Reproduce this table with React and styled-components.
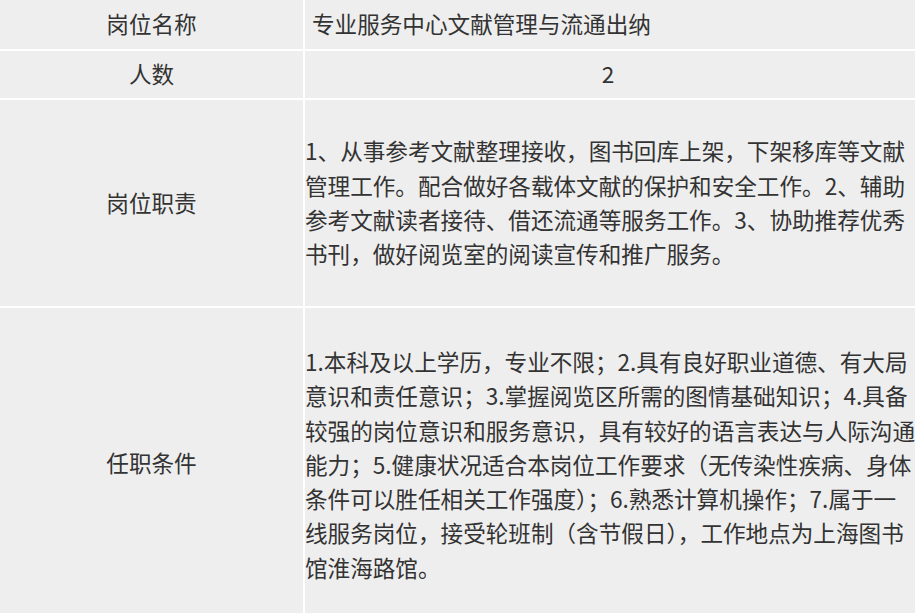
import React from "react";
import styled, { createGlobalStyle } from "styled-components";

const GlobalStyle = createGlobalStyle`
  html, body {
    margin: 0;
    padding: 0;
    background: #ffffff;
    overflow: hidden;
  }
  body {
    font-family: "Noto Sans CJK SC", "Noto Sans", sans-serif;
    color: #333333;
  }
`;

const Table = styled.div`
  display: grid;
  grid-template-columns: 303px 1fr;
  grid-template-rows: 49px 47px 206px auto;
  gap: 2px;
  background: #ffffff;
  width: 915px;
`;

const Label = styled.div`
  background: #eeeeee;
  display: flex;
  align-items: center;
  justify-content: center;
  font-size: 22.6px;
  line-height: 1;
`;

const Value = styled.div`
  background: #eeeeee;
  display: flex;
  flex-direction: column;
  justify-content: center;
  align-items: ${(p) => (p.$center ? "center" : "flex-start")};
  padding: ${(p) => p.$pad || "0"};
  font-size: 22.6px;
  line-height: 1;
`;

const Paragraph = styled.div`
  font-size: 22.6px;
  line-height: 34.3px;
  white-space: nowrap;
`;

const Line = styled.div``;

const rows = [
  { label: "岗位名称", text: ["专业服务中心文献管理与流通出纳"], pad: "0 0 0 7px" },
  { label: "人数", text: ["2"], center: true, pad: "0 4px 0 0" },
  {
    label: "岗位职责",
    pad: "0",
    para: [
      "1、从事参考文献整理接收，图书回库上架，下架移库等文献",
      "管理工作。配合做好各载体文献的保护和安全工作。2、辅助",
      "参考文献读者接待、借还流通等服务工作。3、协助推荐优秀",
      "书刊，做好阅览室的阅读宣传和推广服务。",
    ],
  },
  {
    label: "任职条件",
    pad: "37px 0 33px 0",
    para: [
      "1.本科及以上学历，专业不限；2.具有良好职业道德、有大局",
      "意识和责任意识；3.掌握阅览区所需的图情基础知识；4.具备",
      "较强的岗位意识和服务意识，具有较好的语言表达与人际沟通",
      "能力；5.健康状况适合本岗位工作要求（无传染性疾病、身体",
      "条件可以胜任相关工作强度）；6.熟悉计算机操作；7.属于一",
      "线服务岗位，接受轮班制（含节假日），工作地点为上海图书",
      "馆淮海路馆。",
    ],
  },
];

export default function App() {
  return (
    <>
      <GlobalStyle />
      <Table>
        {rows.map((row) => (
          <React.Fragment key={row.label}>
            <Label>{row.label}</Label>
            <Value $center={row.center} $pad={row.pad}>
              {row.para ? (
                <Paragraph>
                  {row.para.map((l) => (
                    <Line key={l}>{l}</Line>
                  ))}
                </Paragraph>
              ) : (
                row.text[0]
              )}
            </Value>
          </React.Fragment>
        ))}
      </Table>
    </>
  );
}
